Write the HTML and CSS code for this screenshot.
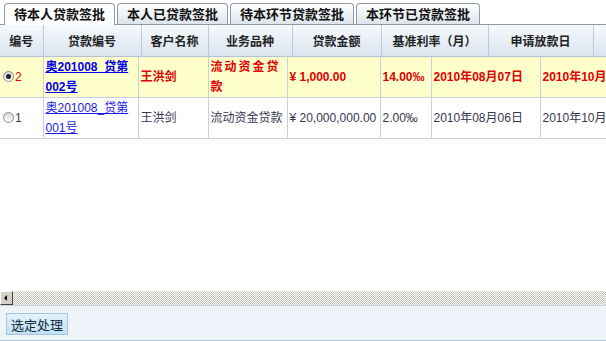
FILE: index.html
```html
<!DOCTYPE html>
<html lang="zh-CN">
<head>
  <meta charset="UTF-8">
  <title>贷款签批</title>
<link rel="stylesheet" href="styles.css">
</head>
<body>
<div class="page">
  <div class="tabs">
    <div class="tab active">待本人贷款签批</div>
    <div class="tab">本人已贷款签批</div>
    <div class="tab">待本环节贷款签批</div>
    <div class="tab">本环节已贷款签批</div>
  </div>

  <div class="grid">
    <table class="grid-head">
      <colgroup>
        <col style="width:43px"><col style="width:98px"><col style="width:67px"><col style="width:84px">
        <col style="width:89px"><col style="width:107px"><col style="width:105px"><col style="width:120px">
      </colgroup>
      <tr>
        <th>编号</th>
        <th>贷款编号</th>
        <th>客户名称</th>
        <th>业务品种</th>
        <th>贷款金额</th>
        <th>基准利率（月）</th>
        <th>申请放款日</th>
        <th></th>
      </tr>
    </table>

    <div class="grid-body">
      <table>
        <colgroup>
          <col style="width:43px"><col style="width:95px"><col style="width:70px"><col style="width:79px">
          <col style="width:93px"><col style="width:51px"><col style="width:109px"><col style="width:120px">
        </colgroup>
        <tr class="row-selected">
          <td class="no"><span class="radio checked"></span>2</td>
          <td><a href="#">奥201008_贷第002号</a></td>
          <td>王洪剑</td>
          <td class="wide">流动资金贷款</td>
          <td>¥ 1,000.00</td>
          <td>14.00‰</td>
          <td>2010年08月07日</td>
          <td class="cut">2010年10月07日</td>
        </tr>
        <tr>
          <td class="no"><span class="radio"></span>1</td>
          <td><a href="#">奥201008_贷第001号</a></td>
          <td>王洪剑</td>
          <td>流动资金贷款</td>
          <td>¥ 20,000,000.00</td>
          <td>2.00‰</td>
          <td>2010年08月06日</td>
          <td class="cut">2010年10月06日</td>
        </tr>
      </table>
    </div>
  </div>

  <div class="hscroll">
    <div class="arrow-left"></div>
    <div class="track"></div>
  </div>

  <div class="toolbar">
    <button class="btn">选定处理</button>
  </div>
</div>
</body>
</html>
```

FILE: styles.css
```css
body {
  margin: 0;
  padding: 0;
  background: #fff;
  font-family: "Liberation Sans", "Noto Sans CJK SC", sans-serif;
  font-size: 12px;
  color: #333;
}
.page {
  width: 606px;
  height: 341px;
  overflow: hidden;
  display: flex;
  flex-direction: column;
}

/* tabs */
.tabs {
  display: flex;
  align-items: flex-end;
  gap: 2px;
  height: 24px;
  padding-left: 4px;
  border-bottom: 1px solid #8f9aa8;
}
.tab {
  height: 20px;
  line-height: 20px;
  padding: 0 9px;
  border: 1px solid #8f9aa8;
  border-bottom: none;
  border-radius: 4px 4px 0 0;
  background: linear-gradient(#ffffff, #dde4ec);
  font-family: "Noto Sans CJK SC", sans-serif;
  font-size: 13px;
  font-weight: bold;
  color: #111;
}
.tab.active {
  height: 21px;
  margin-bottom: -1px;
  background: #fff;
}

/* grid */
.grid {
  flex: 1;
  display: flex;
  flex-direction: column;
  overflow: hidden;
}
table {
  border-collapse: collapse;
  table-layout: fixed;
}
.grid-head {
  width: 713px;
}
.grid-head th {
  height: 31px;
  padding: 0;
  border-right: 1px solid #bccbdb;
  border-bottom: 1px solid #b3c3d5;
  background: linear-gradient(#f6f9fc, #dbe4ef);
  font-family: "Noto Sans CJK SC", sans-serif;
  font-size: 12px;
  font-weight: bold;
  color: #222;
  text-align: center;
  white-space: nowrap;
}
.grid-body {
  flex: 1;
  overflow: hidden;
}
.grid-body table {
  width: 660px;
}
.grid-body td {
  height: 39px;
  padding: 0 1px 0 2px;
  border-right: 1px solid #c3d2e4;
  border-bottom: 1px solid #c3d2e4;
  line-height: 20px;
  vertical-align: middle;
  color: #38364f;
}
.grid-body td.cut {
  white-space: nowrap;
  overflow: hidden;
}
.grid-body td.no {
  padding-left: 3px;
}
.grid-body a {
  color: #1a1ae6;
  text-decoration: underline;
}
.row-selected td {
  background: #ffffcc;
  color: #e00000;
  font-weight: bold;
}
.row-selected td.no {
  font-weight: normal;
}
.row-selected td.wide {
  letter-spacing: 2px;
}
.row-selected a {
  color: #0000ee;
}

.radio {
  display: inline-block;
  width: 9px;
  height: 9px;
  margin-right: 1px;
  border: 1px solid #8a8a8a;
  border-radius: 50%;
  background: linear-gradient(#d8d8d8, #fff);
  vertical-align: -1px;
  position: relative;
}
.radio.checked::after {
  content: "";
  position: absolute;
  left: 2px;
  top: 2px;
  width: 5px;
  height: 5px;
  border-radius: 50%;
  background: #222;
}

/* horizontal scrollbar */
.hscroll {
  display: flex;
  height: 14px;
}
.arrow-left {
  width: 11px;
  height: 12px;
  background: #d4d0c8;
  border: 1px solid;
  border-color: #fff #404040 #404040 #fff;
  position: relative;
}
.arrow-left::after {
  content: "";
  position: absolute;
  left: 3px;
  top: 3px;
  border-style: solid;
  border-width: 3px 3px 3px 0;
  border-color: transparent #000 transparent transparent;
}
.track {
  flex: 1;
  background: repeating-conic-gradient(#c9c5bd 0 25%, #ffffff 0 50%) 0 0 / 2px 2px;
}

/* bottom toolbar */
.toolbar {
  height: 36px;
  padding: 7px 0 0 6px;
  box-sizing: border-box;
  background: #eef4f9;
  border-top: 1px solid #c4d2de;
  border-bottom: 1px solid #a9c4dc;
}
.btn {
  width: 62px;
  height: 22px;
  padding: 0;
  border: 1px solid #a7c3da;
  background: linear-gradient(#e4f2fb, #c0e2f5);
  font-family: "Noto Sans CJK SC", sans-serif;
  font-size: 13px;
  color: #10283a;
}
```
